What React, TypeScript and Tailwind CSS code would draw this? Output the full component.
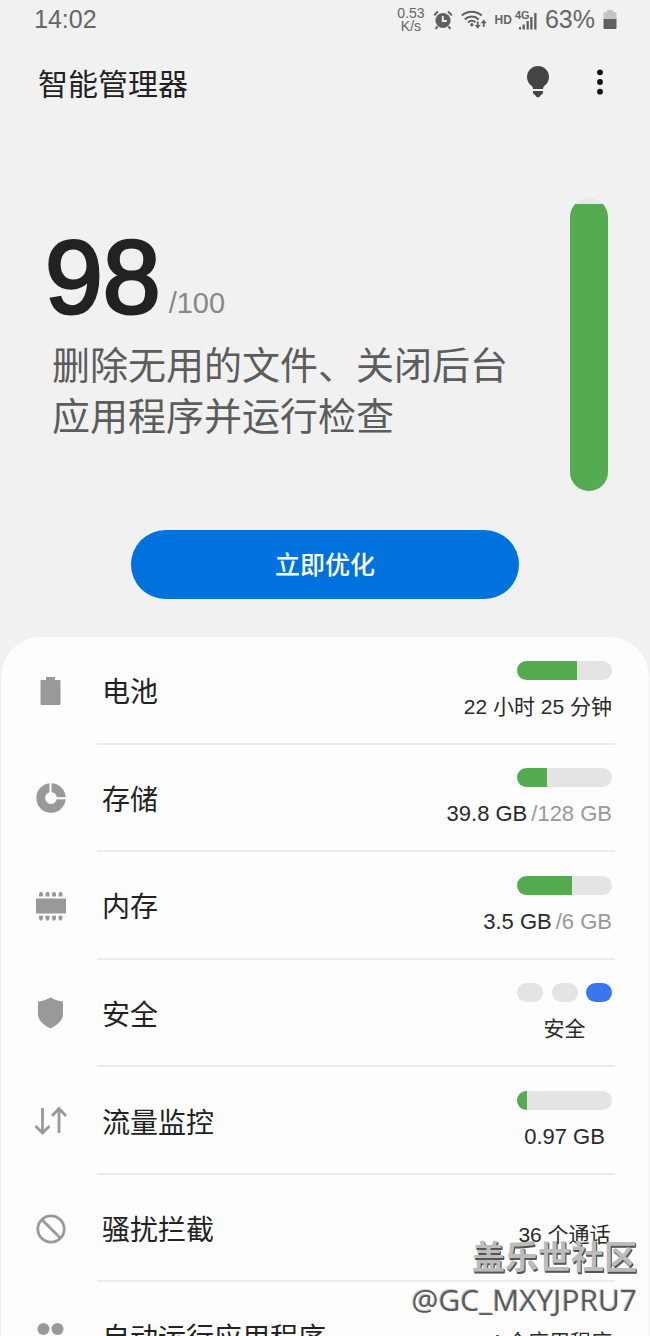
import type { ReactNode } from "react";

function AlarmIcon() {
  return (
    <svg width="20" height="20" viewBox="0 0 20 20" aria-hidden="true">
      <circle cx="10" cy="10.5" r="7.6" fill="#606060" />
      <path d="M1.2 5.2 5 1.6M18.8 5.2 15 1.6M4.6 16.4 2.6 18.8M15.4 16.4l2 2.4" stroke="#606060" strokeWidth="2" fill="none" />
      <path d="M9.8 6v5h4" stroke="#f1f1f1" strokeWidth="1.8" fill="none" />
    </svg>
  );
}

function WifiIcon() {
  return (
    <svg width="26" height="20" viewBox="0 0 26 20" fill="none" stroke="#606060" strokeWidth="2" aria-hidden="true">
      <path d="M.8 5.6C6.5.4 15 .4 20.700 5.600" />
      <path d="M3.800 9.400c4-3.800 10-3.800 14 0" />
      <path d="M6.900 12.400c2.400-2 5.400-2 7.600-.2" />
      <circle cx="10.800" cy="14.800" r="1.700" fill="#606060" stroke="none" />
      <path d="M16.700 11.500v5.500M22.700 17v-5" strokeWidth="1.800" />
      <path d="M13.700 15h6l-3 3.800zM19.700 13.200h6l-3-3.800z" fill="#606060" stroke="none" />
    </svg>
  );
}

function SignalIcon() {
  return (
    <svg width="18" height="18" viewBox="0 0 18 18" fill="#606060" aria-hidden="true">
      <path d="M0 15h2v2.500H0zM3.500 12.500h2.300v5H3.500zM7.500 9h2.300v8.500H7.500zM11.200 5h2.300v12.500h-2.300zM15.200 1h2.300v16.500h-2.300z" />
    </svg>
  );
}

function StatusBatteryIcon() {
  return (
    <svg width="14" height="20" viewBox="0 0 14 20" aria-hidden="true">
      <path d="M4 0h6v2h2q1.500 0 1.500 1.500V9H.5V3.500Q.5 2 2 2h2z" fill="#c4c4c4" />
      <path d="M.5 9h13v9q0 1-1 1h-11q-1 0-1-1z" fill="#606060" />
    </svg>
  );
}

function BulbIcon() {
  return (
    <svg width="24" height="32" viewBox="0 0 24 32" fill="#444" aria-hidden="true">
      <path d="M12 0a11 11 0 0 0-11 11c0 4 2 6.800 4.500 8.800.9.800 1.300 1.500 1.500 3.200h10c.2-1.700.6-2.400 1.500-3.200C21 17.800 23 15 23 11A11 11 0 0 0 12 0z" />
      <path d="M7 25h10v1.300c0 1.400-.8 2.200-2.200 2.600-.6 1.500-1.500 2.300-2.800 2.300s-2.200-.8-2.800-2.300C7.800 28.500 7 27.700 7 26.300z" />
    </svg>
  );
}

function MoreIcon() {
  return (
    <svg width="8" height="26" viewBox="0 0 8 26" fill="#111" aria-hidden="true">
      <circle cx="4" cy="3.300" r="2.900" />
      <circle cx="4" cy="13" r="2.900" />
      <circle cx="4" cy="22.700" r="2.900" />
    </svg>
  );
}

const icons: Record<string, ReactNode> = {
  battery: <path d="M11 2h9v3h4.500q1 0 1 1v23q0 1-1 1h-18q-1 0-1-1V6q0-1 1-1H11z" fill="#999" />,
  storage: (
    <>
      <circle cx="16" cy="16" r="10.300" fill="none" stroke="#999" strokeWidth="8.800" />
      <path d="M15.500 0v11M20 16.300h12" stroke="#fdfdfd" strokeWidth="2" />
    </>
  ),
  memory: (
    <g fill="#999">
      <rect x="1" y="8.500" width="30" height="15" />
      <path d="M4 6.500V3.700l1-1.700h2l1 1.700v2.800zM10.500 6.500V3.700l1-1.700h2l1 1.700v2.800zM17 6.500V3.700l1-1.700h2l1 1.700v2.800zM23.500 6.500V3.700l1-1.700h2l1 1.700v2.800z" />
      <path d="M4 25.800v2.700L5 30.500h2l1-2v-2.700zM10.500 25.800v2.700l1 2h2l1-2v-2.700zM17 25.800v2.700l1 2h2l1-2v-2.700zM23.500 25.800v2.700l1 2h2l1-2v-2.700z" />
    </g>
  ),
  shield: <path d="M15.500 0.500c4 2.200 8 3.500 12.500 4v12.500c0 6.500-5.500 11-12.500 14.500C8.500 28 3 23.500 3 17V4.500c4.500-.5 8.500-1.800 12.500-4z" fill="#999" />,
  data: (
    <path d="M7.500 3v25M.5 21l7 7 7-7M24 28V3.500M17 11l7-7.500 7 7.500" fill="none" stroke="#999" strokeWidth="2.800" />
  ),
  block: (
    <g fill="none" stroke="#999" strokeWidth="2.800">
      <circle cx="16" cy="16" r="13.200" />
      <path d="M7 6.700 25.300 25" />
    </g>
  ),
  apps: (
    <g fill="#999">
      <circle cx="8.500" cy="9" r="6" />
      <circle cx="22.500" cy="9" r="6" />
      <circle cx="8.500" cy="23" r="6" />
      <circle cx="22.500" cy="23" r="6" />
    </g>
  ),
};

function Meter({ percent }: { percent: number }) {
  return (
    <div className="h-[19px] w-[95px] overflow-hidden rounded-full bg-[#e4e4e4]">
      <div className="h-full bg-[#55ab50]" style={{ width: `${percent}%` }} />
    </div>
  );
}

function SecurityDots() {
  return (
    <div className="flex w-[95px] justify-between">
      <span className="h-[19px] w-[26px] rounded-full bg-[#e4e4e4]" />
      <span className="h-[19px] w-[26px] rounded-full bg-[#e4e4e4]" />
      <span className="h-[19px] w-[26px] rounded-full bg-[#3b76ee]" />
    </div>
  );
}

type Row = {
  icon: string;
  label: string;
  value: string;
  total?: string;
  graphic?: ReactNode;
  latin?: boolean;
};

const rows: Row[] = [
  { icon: "battery", label: "电池", value: "22 小时 25 分钟", graphic: <Meter percent={63} /> },
  { icon: "storage", label: "存储", value: "39.8 GB", total: "/128 GB", graphic: <Meter percent={32} />, latin: true },
  { icon: "memory", label: "内存", value: "3.5 GB", total: "/6 GB", graphic: <Meter percent={58} />, latin: true },
  { icon: "shield", label: "安全", value: "安全", graphic: <SecurityDots /> },
  { icon: "data", label: "流量监控", value: "0.97 GB", graphic: <Meter percent={10} />, latin: true },
  { icon: "block", label: "骚扰拦截", value: "36 个通话" },
  { icon: "apps", label: "自动运行应用程序", value: "4 个应用程序" },
];

function ListRow({ row }: { row: Row }) {
  return (
    <li className="flex">
      <a href="#" className="flex flex-1 items-stretch pr-[34px] pl-[34px]">
        <span className="flex w-[62px] items-center">
          <svg width="32" height="32" viewBox="0 0 32 32" aria-hidden="true">
            {icons[row.icon]}
          </svg>
        </span>
        <span className="flex flex-1 items-center justify-between border-b-2 border-[#ebebeb] pr-[3px] pl-[5px]">
          <span className="pt-[7px] text-[28px] leading-8 text-[#222]">{row.label}</span>
          <span className={row.graphic ? "flex flex-col items-end gap-[15px]" : "flex flex-col items-end pt-[14px]"}>
            {row.graphic}
            <span className={row.latin ? "min-w-[95px] text-center text-[22px] leading-6 text-[#2a2a2a]" : "min-w-[95px] text-center text-[21px] leading-6 text-[#2a2a2a]"}>
              {row.value}
              {row.total && <span className="ml-1 text-[#999]">{row.total}</span>}
            </span>
          </span>
        </span>
      </a>
    </li>
  );
}

export default function App() {
  return (
    <div className="relative flex h-screen flex-col overflow-hidden bg-[#f1f1f1] font-['Liberation_Sans','Noto_Sans_CJK_SC',sans-serif]">
      <div className="flex h-10 shrink-0 items-center justify-between pr-[33px] pl-[34px] text-[25px] text-[#666]">
        <span>14:02</span>
        <div className="flex items-center gap-2">
          <span className="text-center text-[14px] leading-[13px]">
            0.53
            <br />
            K/s
          </span>
          <AlarmIcon />
          <WifiIcon />
          <span className="flex items-center gap-[3px]">
            <span className="text-[12px] font-bold">HD</span>
            <span className="relative flex h-5 w-[22px] items-end justify-end">
              <span className="absolute -top-px left-0 text-[11px] leading-3 font-bold">4G</span>
              <SignalIcon />
            </span>
          </span>
          <span>63%</span>
          <StatusBatteryIcon />
        </div>
      </div>

      <header className="flex h-[88px] shrink-0 items-center justify-between pr-[46px] pl-[38px]">
        <h1 className="text-[30px] text-[#222]">智能管理器</h1>
        <div className="flex items-center gap-[46px] pb-1">
          <button type="button" aria-label="提示">
            <BulbIcon />
          </button>
          <button type="button" aria-label="更多选项">
            <MoreIcon />
          </button>
        </div>
      </header>

      <section className="mt-[70px] flex shrink-0 items-start justify-between pr-[42px] pl-[45px]">
        <div className="pt-[27px]">
          <p className="flex items-baseline gap-2">
            <span className="text-[104px] leading-[104px] text-[#222] [-webkit-text-stroke:3px_#222]">98</span>
            <span className="text-[29px] leading-8 text-[#888]">/100</span>
          </p>
          <p className="mt-3 max-w-[474px] pl-[7px] text-[38px] leading-[51px] text-[#5c5c5c]">
            删除无用的文件、关闭后台应用程序并运行检查
          </p>
        </div>
        <div className="flex h-[293px] w-[38px] flex-col justify-end overflow-hidden rounded-full bg-[#e6e8ea]">
          <div className="h-[98%] bg-[#55ab50]" />
        </div>
      </section>

      <button
        type="button"
        className="mx-[131px] mt-[39px] h-[69px] shrink-0 rounded-full bg-[#0072de] pt-0.5 text-[25px] font-medium text-white"
      >
        立即优化
      </button>

      <ul className="mx-px mt-[38px] grid h-[753px] shrink-0 grid-rows-7 rounded-t-[40px] bg-[#fdfdfd]">
        {rows.map((row) => (
          <ListRow key={row.label} row={row} />
        ))}
      </ul>

      <div className="pointer-events-none absolute right-[13px] bottom-[15px] text-right">
        <p className="text-[33px] leading-[42px] font-bold text-[#bcbcbc] [text-shadow:1px_1px_0_#555,1px_2px_0_#555]">盖乐世社区</p>
        <p className="font-['Open_Sans',sans-serif] text-[30px] leading-[42px] text-[#5a5a5a] [text-shadow:-1px_-1px_0_#c8c8c8]">@GC_MXYJPRU7</p>
      </div>
    </div>
  );
}
